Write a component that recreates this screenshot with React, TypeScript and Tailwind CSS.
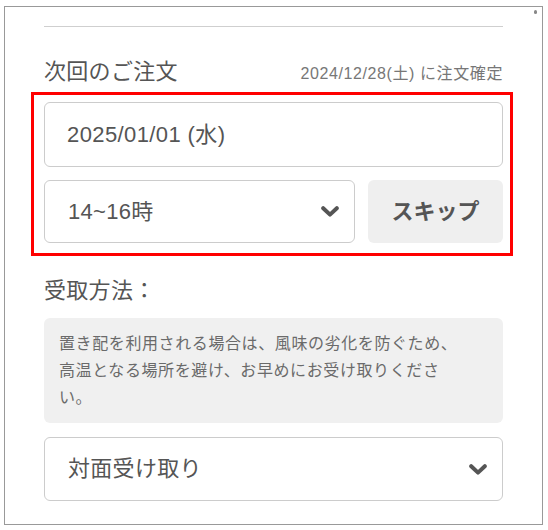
import React from 'react';

const Chevron: React.FC = () => (
  <svg width="18" height="11" viewBox="0 0 18 11" className="shrink-0 text-[#555]">
    <path
      d="M2.2 2.2 L9 8.6 L15.8 2.2"
      fill="none"
      stroke="currentColor"
      strokeWidth="4"
      strokeLinecap="round"
      strokeLinejoin="round"
    />
  </svg>
);

interface SelectBoxProps {
  label: string;
  className?: string;
}

const SelectBox: React.FC<SelectBoxProps> = ({ label, className = '' }) => (
  <div
    className={`flex items-center justify-between rounded-[6px] border border-[#cccccc] bg-white pl-[23px] pr-[15px] ${className}`}
  >
    <span className="text-[22px] leading-none tracking-[0.3px] text-[#555]">{label}</span>
    <Chevron />
  </div>
);

const App: React.FC = () => {
  return (
    <div className="min-h-[530px] bg-white pt-[6px] pl-[4px] font-['Liberation_Sans','Noto_Sans_CJK_JP',sans-serif]">
      <div className="relative h-[519px] w-[539px] border border-[#999]">
        {/* scroll indicator dot */}
        <div className="absolute right-[5px] top-[3px] h-[4px] w-[3px] rounded-full bg-[#888]" />

        <div className="px-[39px]">
          <div className="mt-[19px] h-px bg-[#cfcfcf]" />

          {/* next order header */}
          <div className="mt-[30px] flex items-baseline justify-between leading-[30px]">
            <h2 className="text-[22px] font-normal tracking-[0.3px] text-[#555]">次回のご注文</h2>
            <span className="text-[16px] tracking-[0.6px] text-[#777]">2024/12/28(土) に注文確定</span>
          </div>

          {/* delivery date & time */}
          <div className="relative mt-[13px]">
            <div className="pointer-events-none absolute -left-[13px] -right-[10px] -top-[10px] -bottom-[13px] border-[3px] border-[#ff0000]" />
            <div className="flex h-[65px] items-center rounded-[6px] border border-[#cccccc] bg-white pl-[22px]">
              <span className="text-[22px] leading-none tracking-[0.4px] text-[#555]">2025/01/01 (水)</span>
            </div>
            <div className="mt-[13px] flex h-[63px] gap-[13px]">
              <SelectBox label="14~16時" className="w-[311px]" />
              <button className="flex flex-1 items-center justify-center rounded-[6px] bg-[#efefef] text-[22px] font-bold text-[#555]">
                スキップ
              </button>
            </div>
          </div>

          {/* receive method */}
          <div className="mt-[33px] text-[22px] leading-[30px] tracking-[0.3px] text-[#555]">受取方法：</div>

          <div className="mt-[12px] h-[105px] rounded-[6px] bg-[#f0f0f0] pl-[15px] pt-[12px] text-[16px] leading-[27px] tracking-[0.6px] text-[#6a6a6a]">
            置き配を利用される場合は、風味の劣化を防ぐため、
            <br />
            高温となる場所を避け、お早めにお受け取りくださ
            <br />
            い。
          </div>

          <SelectBox label="対面受け取り" className="mt-[14px] h-[64px]" />
        </div>
      </div>
    </div>
  );
};

export default App;
